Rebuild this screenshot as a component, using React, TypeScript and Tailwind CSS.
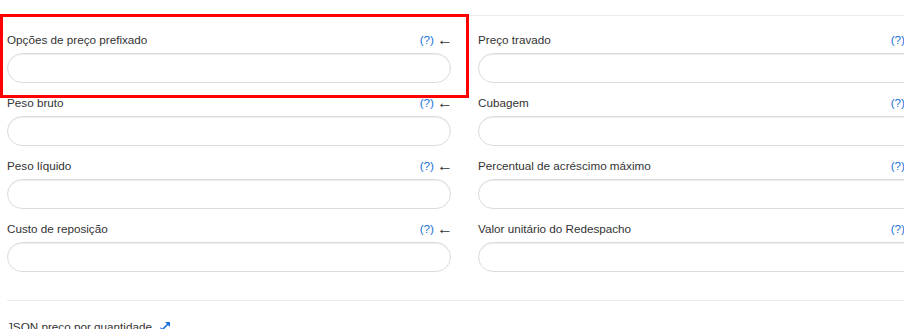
const FIELDS: [string, string][] = [
  ["Opções de preço prefixado", "Preço travado"],
  ["Peso bruto", "Cubagem"],
  ["Peso líquido", "Percentual de acréscimo máximo"],
  ["Custo de reposição", "Valor unitário do Redespacho"],
];

function Field({ label }: { label: string }) {
  return (
    <div className="flex flex-col">
      <div className="flex h-[23px] items-center justify-between pb-[3px]">
        <span className="text-[11.7px] text-[#333]">{label}</span>
        <span className="flex items-center gap-[3px] text-[11.7px]">
          <span className="text-[#1a73d9]">(?)</span>
          <span className="-mr-[2px] text-[16px] leading-none text-[#333]">←</span>
        </span>
      </div>
      <input
        type="text"
        className="h-[30px] rounded-full border border-[#dcdcdc] bg-white px-3 text-[12px] shadow-[inset_0_1px_1px_rgba(0,0,0,0.075)] outline-none"
      />
    </div>
  );
}

export default function App() {
  return (
    <div className="relative h-[329px] w-[904px] overflow-hidden bg-white font-['Liberation_Sans',Arial,sans-serif]">
      <div className="w-[940px] pl-[7px] pt-[15px]">
        <div className="border-t border-[#ececec]" />
        <div className="grid grid-cols-[444px_444px] gap-x-[27px] gap-y-[10px] pt-[14px]">
          {FIELDS.flat().map((label) => (
            <Field key={label} label={label} />
          ))}
        </div>
        <div className="mt-[28px] border-t border-[#ececec]" />
        <div className="flex items-center gap-[8px] pt-[17px]">
          <span className="text-[11.7px] text-[#333]">JSON preço por quantidade</span>
          <svg width="11" height="11" viewBox="0 0 11 11" className="text-[#1a73d9]">
            <path d="M1 10 L9.5 1.5" stroke="currentColor" strokeWidth="1.6" />
            <path d="M5 1 H10 V6 Z" fill="currentColor" />
            <path d="M0.5 6 V10.5 H5 Z" fill="currentColor" />
          </svg>
        </div>
      </div>
      <div className="pointer-events-none absolute left-0 top-[14px] h-[84px] w-[469px] border-[3px] border-[#ff0000]" />
    </div>
  );
}
